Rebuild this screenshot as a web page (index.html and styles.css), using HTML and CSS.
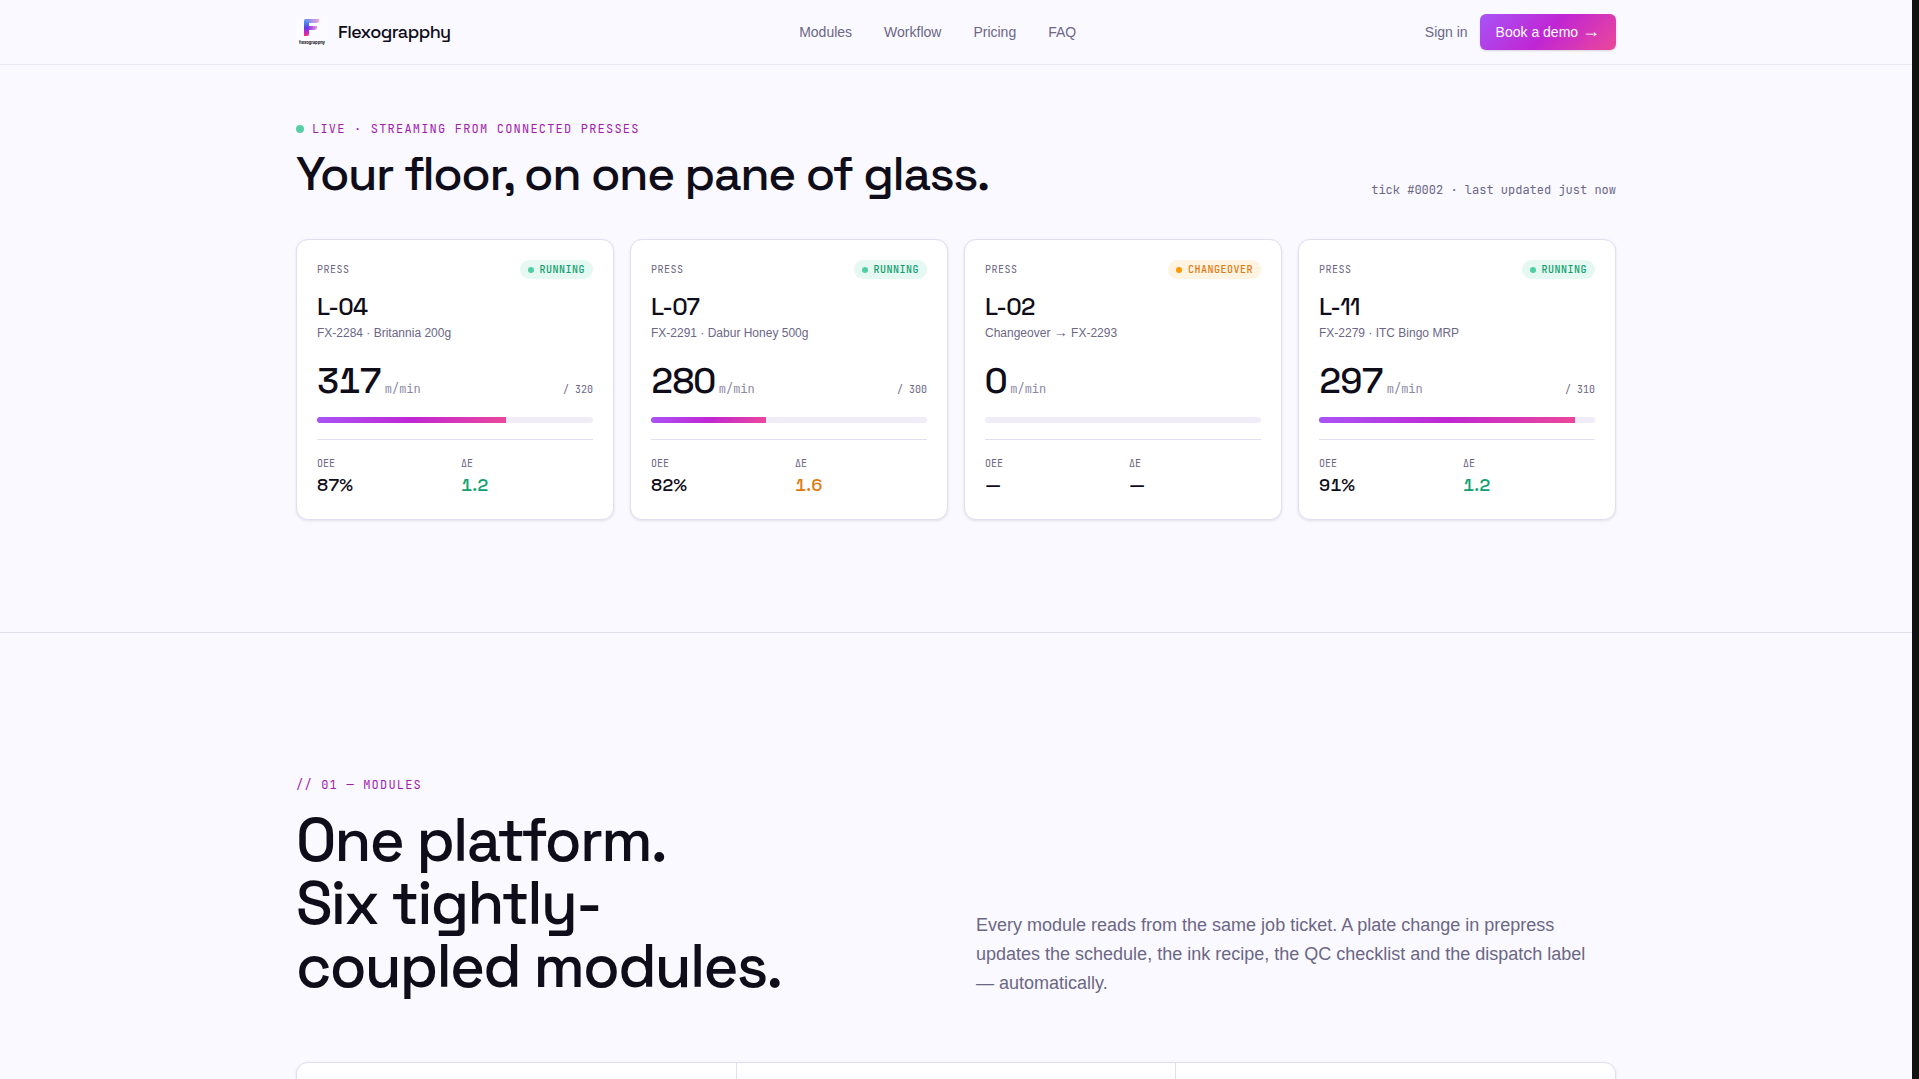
FILE: index.html
```html
<!DOCTYPE html>
<html lang="en">
<head>
  <meta charset="UTF-8">
  <meta name="viewport" content="width=device-width, initial-scale=1">
  <title>Flexograpphy</title>
  <link rel="stylesheet" href="styles.css">
</head>
<body>
  <header class="site-header">
    <div class="container header-row">
      <a class="brand" href="#">
        <svg class="brand-logo" viewBox="0 0 32 32" aria-hidden="true">
          <defs>
            <linearGradient id="stem" x1="0" y1="0" x2="0" y2="1">
              <stop offset="0" stop-color="#4f8df5"/>
              <stop offset="0.4" stop-color="#5b3fe0"/>
              <stop offset="0.7" stop-color="#c026d3"/>
              <stop offset="1" stop-color="#ff2d78"/>
            </linearGradient>
            <linearGradient id="arm" x1="0" y1="0" x2="1" y2="0">
              <stop offset="0" stop-color="#4f8df5"/>
              <stop offset="1" stop-color="#f3a0dc"/>
            </linearGradient>
            <linearGradient id="bar" x1="0" y1="0" x2="1" y2="0">
              <stop offset="0" stop-color="#8b3fe6"/>
              <stop offset="1" stop-color="#ee92dc"/>
            </linearGradient>
          </defs>
          <rect width="32" height="32" rx="4" fill="#fcfbff"/>
          <path d="M8 8V5a2 2 0 0 1 2-2h13v1.500a2.500 2.500 0 0 1-2.500 2.500H12z" fill="url(#arm)"/>
          <path d="M8 6l5 0v12a2 2 0 0 1-2 2H8z" fill="url(#stem)"/>
          <path d="M13 10h8v1a3 3 0 0 1-3 3h-5z" fill="url(#bar)"/>
          <text x="16" y="28" class="logo-text">flexograpphy</text>
        </svg>
        <span class="brand-name">Flexograpphy</span>
      </a>
      <nav class="main-nav">
        <a href="#modules">Modules</a>
        <a href="#workflow">Workflow</a>
        <a href="#pricing">Pricing</a>
        <a href="#faq">FAQ</a>
      </nav>
      <div class="header-actions">
        <a class="sign-in" href="#signin">Sign in</a>
        <button class="demo-btn" type="button">Book a demo <span class="arrow">→</span></button>
      </div>
    </div>
  </header>

  <main>
    <!-- Live floor -->
    <section class="live">
      <div class="container">
        <div class="live-head">
          <div>
            <p class="eyebrow"><span class="live-dot"></span>LIVE · STREAMING FROM CONNECTED PRESSES</p>
            <h2 class="live-title">Your floor, on one pane of glass.</h2>
          </div>
          <p class="tick">tick #0002 · last updated just now</p>
        </div>

        <div class="press-grid">
          <article class="press-card">
            <div class="press-top">
              <span class="label">PRESS</span>
              <span class="status running">RUNNING</span>
            </div>
            <h3 class="press-name">L-04</h3>
            <p class="press-job">FX-2284 · Britannia 200g</p>
            <div class="speed">
              <span class="speed-value">317</span>
              <span class="speed-unit">m/min</span>
              <span class="speed-max">/ 320</span>
            </div>
            <div class="track"><div class="fill" style="width: 68.5%"></div></div>
            <dl class="stats">
              <div><dt>OEE</dt><dd>87%</dd></div>
              <div><dt>ΔE</dt><dd class="good">1.2</dd></div>
            </dl>
          </article>

          <article class="press-card">
            <div class="press-top">
              <span class="label">PRESS</span>
              <span class="status running">RUNNING</span>
            </div>
            <h3 class="press-name">L-07</h3>
            <p class="press-job">FX-2291 · Dabur Honey 500g</p>
            <div class="speed">
              <span class="speed-value">280</span>
              <span class="speed-unit">m/min</span>
              <span class="speed-max">/ 300</span>
            </div>
            <div class="track"><div class="fill" style="width: 41.7%"></div></div>
            <dl class="stats">
              <div><dt>OEE</dt><dd>82%</dd></div>
              <div><dt>ΔE</dt><dd class="warn">1.6</dd></div>
            </dl>
          </article>

          <article class="press-card">
            <div class="press-top">
              <span class="label">PRESS</span>
              <span class="status changeover">CHANGEOVER</span>
            </div>
            <h3 class="press-name">L-02</h3>
            <p class="press-job">Changeover <span class="arrow">→</span> FX-2293</p>
            <div class="speed">
              <span class="speed-value">0</span>
              <span class="speed-unit">m/min</span>
            </div>
            <div class="track"><div class="fill" style="width: 0%"></div></div>
            <dl class="stats">
              <div><dt>OEE</dt><dd>—</dd></div>
              <div><dt>ΔE</dt><dd>—</dd></div>
            </dl>
          </article>

          <article class="press-card">
            <div class="press-top">
              <span class="label">PRESS</span>
              <span class="status running">RUNNING</span>
            </div>
            <h3 class="press-name">L-11</h3>
            <p class="press-job">FX-2279 · ITC Bingo MRP</p>
            <div class="speed">
              <span class="speed-value">297</span>
              <span class="speed-unit">m/min</span>
              <span class="speed-max">/ 310</span>
            </div>
            <div class="track"><div class="fill" style="width: 92.7%"></div></div>
            <dl class="stats">
              <div><dt>OEE</dt><dd>91%</dd></div>
              <div><dt>ΔE</dt><dd class="good">1.2</dd></div>
            </dl>
          </article>
        </div>
      </div>
    </section>

    <!-- Modules -->
    <section class="modules" id="modules">
      <div class="container">
        <div class="modules-head">
          <div>
            <p class="eyebrow">// 01 — MODULES</p>
            <h2 class="modules-title">One platform.<br>Six tightly-<br>coupled modules.</h2>
          </div>
          <p class="modules-lead">Every module reads from the same job ticket. A plate change in prepress updates the schedule, the ink recipe, the QC checklist and the dispatch label —&nbsp;automatically.</p>
        </div>
        <div class="modules-grid">
          <div class="module"></div>
          <div class="module"></div>
          <div class="module"></div>
        </div>
      </div>
    </section>
  </main>
</body>
</html>
```
FILE: styles.css
```css
:root {
  --bg: #faf9ff;
  --ink: #0f0d1a;
  --muted: #6b6785;
  --line: #e0def0;
  --track: #f0edf8;
  --green: #0e9f6e;
  --orange: #e07a10;
  --gradient: linear-gradient(135deg, #a855f7 0%, #c026d3 50%, #ec4899 100%);
  --display: "Space Grotesk", Inter, sans-serif;
  --sans: "Liberation Sans", Arial, sans-serif;
  --mono: "JetBrains Mono", "Liberation Mono", monospace;
}

* {
  box-sizing: border-box;
  margin: 0;
}

body {
  height: 100vh;
  overflow: hidden;
  border-right: 7px solid #111;
  background: var(--bg);
  color: var(--ink);
  font-family: var(--sans);
  font-size: 14px;
  line-height: 20px;
}

a {
  color: inherit;
  text-decoration: none;
}

.container {
  max-width: 1400px;
  margin: 0 auto;
  padding: 0 40px;
}

.arrow {
  font-size: 14px;
  line-height: 1;
}

/* Header */
.site-header {
  border-bottom: 1px solid #e9e7f6;
}

.header-row {
  display: flex;
  align-items: center;
  justify-content: space-between;
  height: 64px;
}

.brand {
  display: flex;
  align-items: center;
  gap: 10px;
}

.brand-logo {
  width: 32px;
  height: 32px;
}

.logo-text {
  font-family: Inter, sans-serif;
  font-size: 4px;
  font-weight: 700;
  text-anchor: middle;
  fill: var(--ink);
}

.brand-name {
  font-family: var(--display);
  font-size: 18px;
  font-weight: 500;
  letter-spacing: -0.03em;
}

.main-nav {
  display: flex;
  gap: 32px;
  color: var(--muted);
}

.header-actions {
  display: flex;
  align-items: center;
  gap: 12px;
}

.sign-in {
  color: var(--muted);
}

.demo-btn {
  height: 36px;
  padding: 0 16px;
  border: none;
  border-radius: 6px;
  background: var(--gradient);
  box-shadow: 0 1px 2px rgba(15, 13, 26, 0.15);
  color: #fff;
  font-family: inherit;
  font-size: 14px;
  line-height: 20px;
  cursor: pointer;
}

.demo-btn .arrow {
  font-size: 18px;
}

/* Live floor */
.live {
  padding: 55px 0 112px;
  border-bottom: 1px solid var(--line);
}

.eyebrow {
  display: flex;
  align-items: center;
  gap: 8px;
  color: #a21caf;
  font-family: var(--mono);
  font-size: 12px;
  line-height: 18px;
  letter-spacing: 0.1em;
  white-space: pre;
}

.live-dot {
  width: 8px;
  height: 8px;
  border-radius: 50%;
  background: #56cfa5;
}

.live-head {
  display: flex;
  align-items: flex-end;
  justify-content: space-between;
  margin-bottom: 40px;
}

.live-title {
  margin-top: 11px;
  font-family: var(--display);
  font-size: 48px;
  font-weight: 500;
  line-height: 50px;
  letter-spacing: -0.03em;
}

.tick {
  color: var(--muted);
  font-family: var(--mono);
  font-size: 12px;
  line-height: 18px;
}

.press-grid {
  display: grid;
  grid-template-columns: repeat(4, 1fr);
  gap: 16px;
}

.press-card {
  padding: 20px;
  border: 1px solid var(--line);
  border-radius: 12px;
  background: #fff;
  box-shadow: 0 1px 3px rgba(15, 13, 26, 0.1);
}

.press-top {
  display: flex;
  align-items: center;
  justify-content: space-between;
}

.label,
.status,
.stats dt,
.speed-max {
  color: var(--muted);
  font-family: var(--mono);
  font-size: 10px;
  line-height: 15px;
}

.label,
.status {
  letter-spacing: 0.05em;
}

.status {
  display: flex;
  align-items: center;
  gap: 6px;
  padding: 2px 8px;
  border-radius: 10px;
  font-weight: 500;
}

.status::before {
  content: "";
  width: 6px;
  height: 6px;
  border-radius: 50%;
}

.running {
  background: #e5f8f1;
  color: var(--green);
}

.running::before {
  background: #4fcfa2;
}

.changeover {
  background: #fff3e2;
  color: var(--orange);
}

.changeover::before {
  background: #ff9800;
}

.press-name {
  margin-top: 12px;
  font-family: var(--display);
  font-size: 24px;
  font-weight: 500;
  line-height: 32px;
  letter-spacing: -0.03em;
}

.press-job {
  color: var(--muted);
  font-size: 12px;
  line-height: 20px;
}

.speed {
  display: flex;
  align-items: baseline;
  gap: 4px;
  height: 36px;
  margin: 20px 0 18px;
}

.speed-value {
  font-family: var(--display);
  font-size: 36px;
  font-weight: 500;
  font-variant-numeric: tabular-nums;
  line-height: 36px;
  letter-spacing: -0.03em;
}

.speed-unit {
  color: #8b87a3;
  font-family: var(--mono);
  font-size: 12px;
}

.speed-max {
  margin-left: auto;
}

.track {
  height: 6px;
  overflow: hidden;
  border-radius: 3px;
  background: var(--track);
}

.fill {
  height: 100%;
  background: var(--gradient);
}

.stats {
  display: grid;
  grid-template-columns: 1fr 1fr;
  gap: 12px;
  margin-top: 16px;
  padding-top: 16px;
  border-top: 1px solid var(--line);
}

.stats dd {
  font-family: var(--display);
  font-size: 18px;
  font-weight: 500;
  font-variant-numeric: tabular-nums;
  line-height: 28px;
}

.stats .good {
  color: var(--green);
}

.stats .warn {
  color: var(--orange);
}

/* Modules */
.modules {
  padding-top: 143px;
}

.modules-head {
  display: grid;
  grid-template-columns: 1fr 1fr;
  align-items: end;
  gap: 40px;
  margin-bottom: 64px;
}

.modules-title {
  margin-top: 15px;
  font-family: var(--display);
  font-size: 60px;
  font-weight: 500;
  line-height: 63px;
  letter-spacing: -0.03em;
}

.modules-lead {
  color: var(--muted);
  font-size: 18px;
  line-height: 29px;
}

.modules-grid {
  display: grid;
  grid-template-columns: repeat(3, 1fr);
  gap: 1px;
  overflow: hidden;
  border: 1px solid var(--line);
  border-radius: 12px;
  background: var(--line);
  box-shadow: 0 1px 3px rgba(15, 13, 26, 0.1);
}

.module {
  min-height: 280px;
  background: #fff;
}
```
